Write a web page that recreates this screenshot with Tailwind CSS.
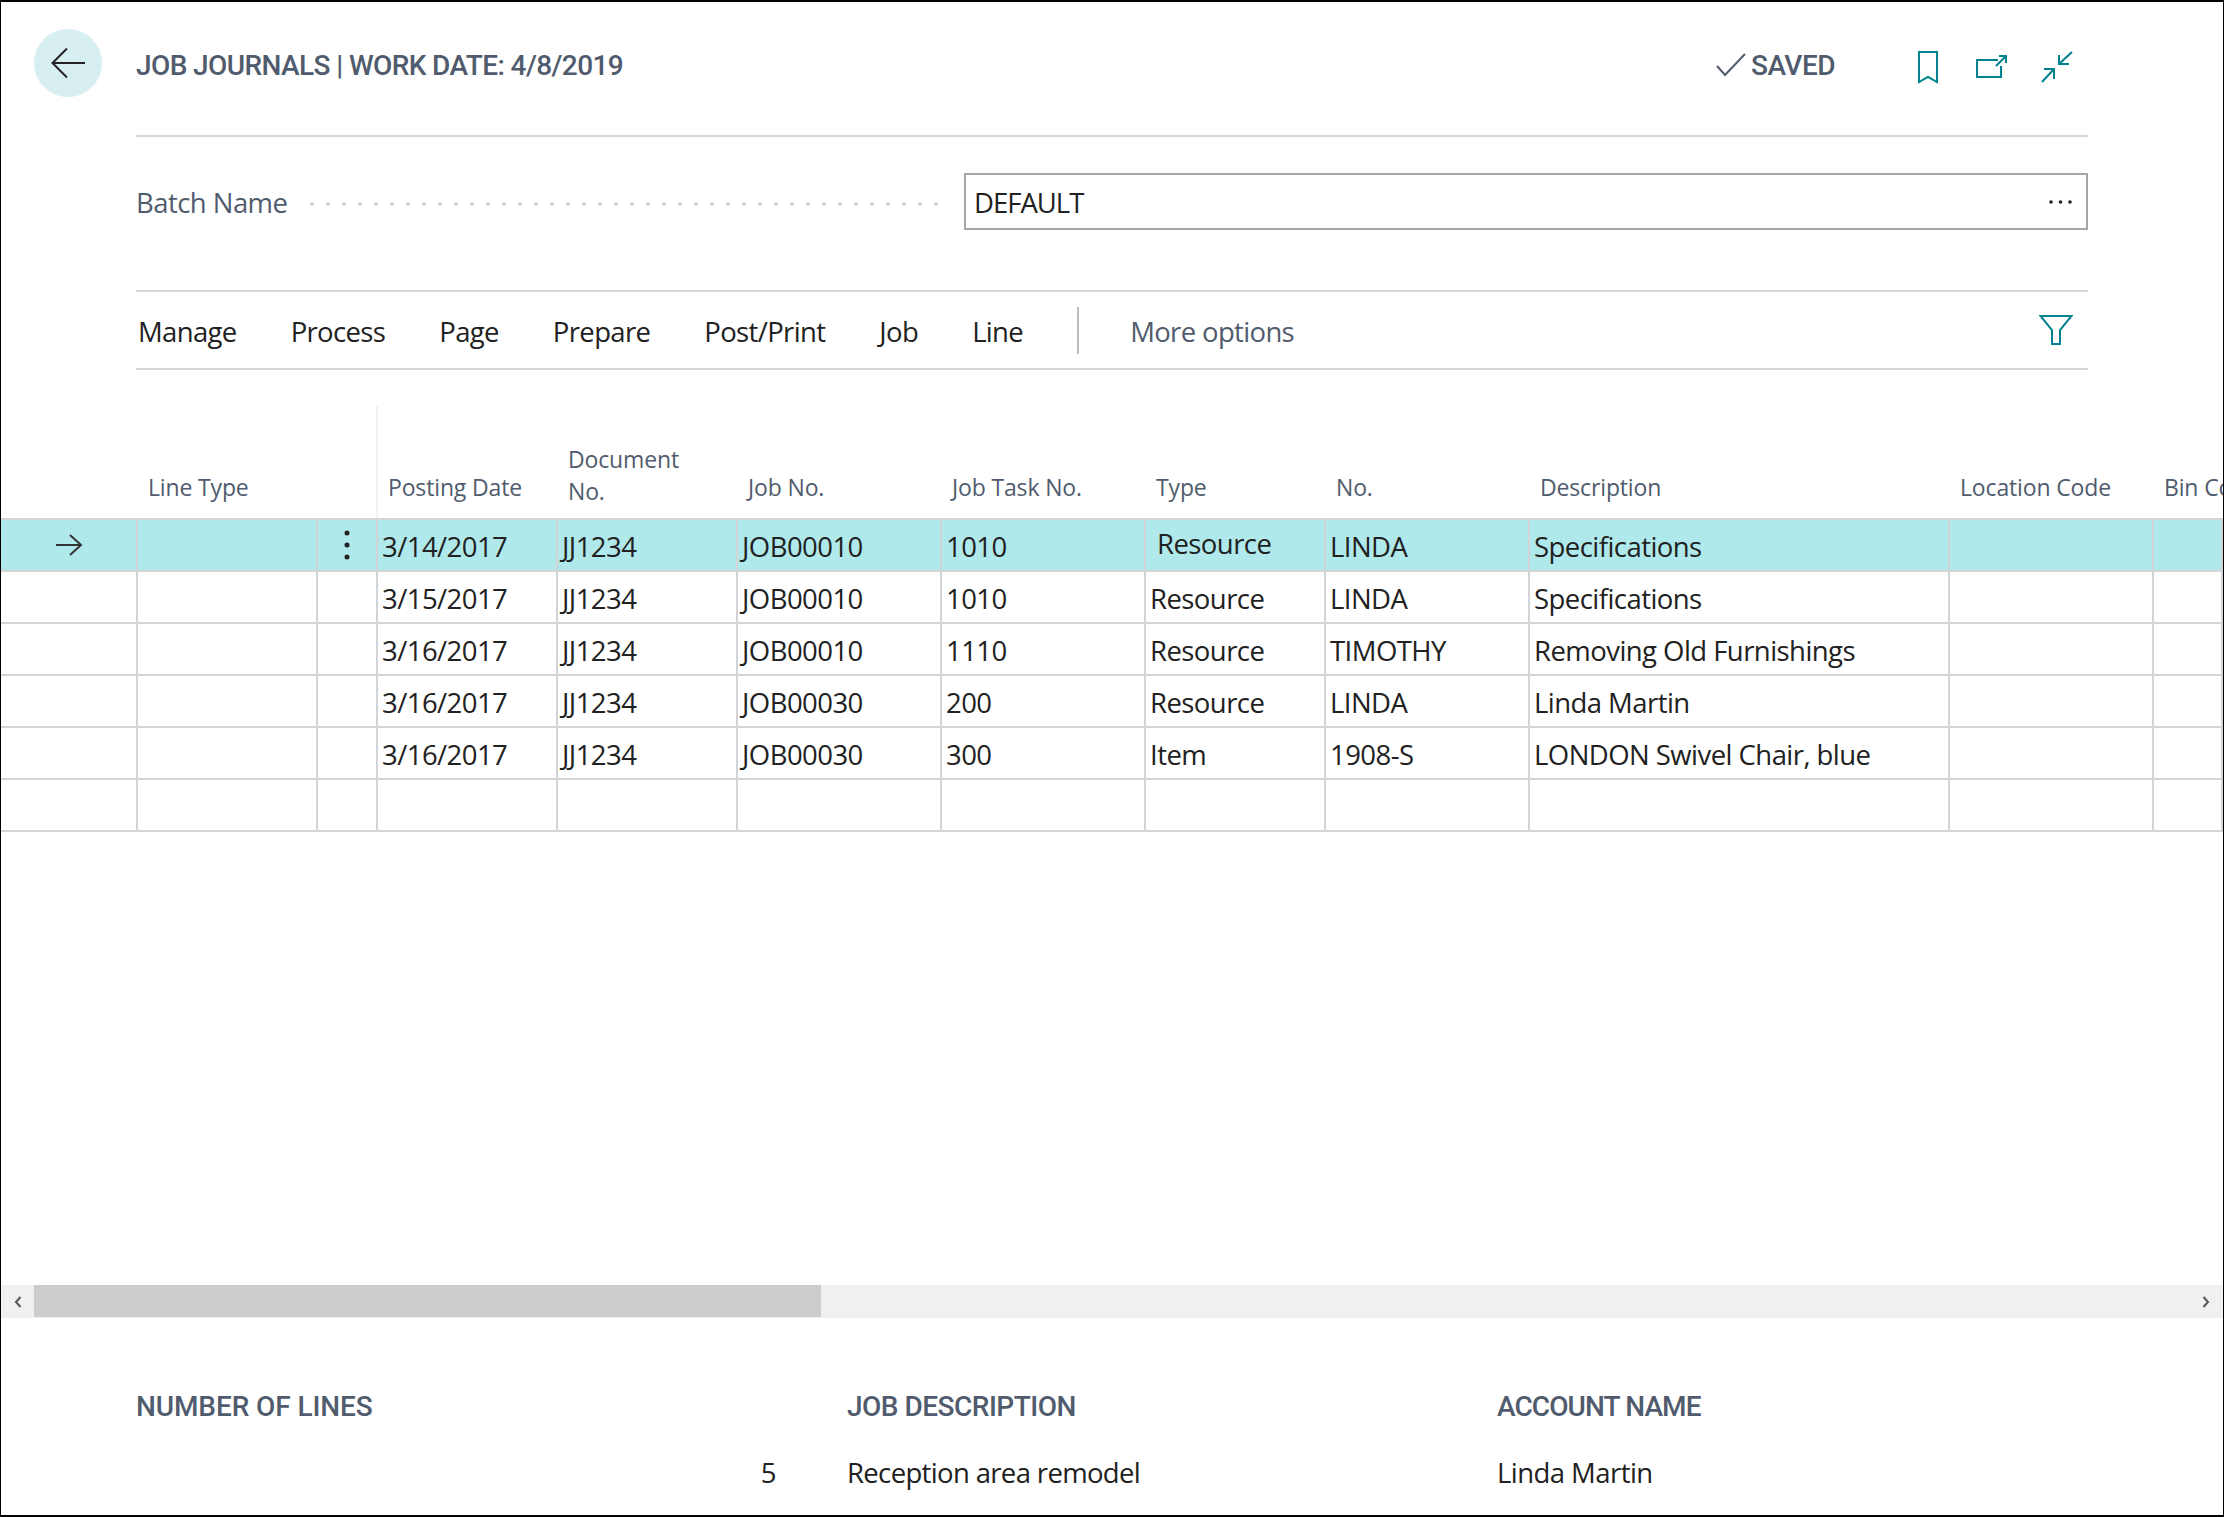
<!DOCTYPE html>
<html lang="en">
<head>
<meta charset="UTF-8" />
<title>Job Journals</title>
<script src="https://cdn.jsdelivr.net/npm/@tailwindcss/browser@4"></script>
</head>
<body class="bg-white">
<div class="w-[2224px] h-[1517px] overflow-hidden bg-white border-x border-y-2 border-black font-['Open_Sans',sans-serif] text-[27.5px] tracking-[-0.55px] text-[#212121]">

    <!-- header -->
    <div class="flex items-center h-[68px] mt-[27px] pl-[33px] pr-[150px]">
        <div class="w-[68px] h-[68px] rounded-full bg-[#d8eff2] flex items-center justify-center">
            <svg width="36" height="32" viewBox="0 0 36 32" fill="none" stroke="#222" stroke-width="2"><path d="M35 16H3M17 1.500 2.500 16 17 30.500"/></svg>
        </div>
        <div class="ml-[34px] mt-[5px] font-['Roboto',sans-serif] font-medium text-[28px] text-[#505c6d] tracking-[-0.6px]">JOB JOURNALS | WORK DATE: 4/8/2019</div>
        <div class="ml-auto flex items-center">
            <svg class="mt-[4px]" width="30" height="24" viewBox="0 0 30 24" fill="none" stroke="#505c6d" stroke-width="2"><path d="M1 13l8 9L29 1"/></svg>
            <span class="ml-[5px] mt-[5px] font-['Roboto',sans-serif] font-medium text-[28px] text-[#505c6d] tracking-[-0.5px]">SAVED</span>
            <svg class="ml-[83px] mt-[9px]" width="20" height="33" viewBox="0 0 20 33" fill="none" stroke="#00828f" stroke-width="2"><path d="M1 1h18v30l-9-5-9 5z"/></svg>
            <svg class="ml-[38px] mt-[8px]" width="31" height="24" viewBox="0 0 31 24" fill="none" stroke="#00828f" stroke-width="2"><path d="M22 5H1v17h24V11M20 11 30 1M23 1h7v7"/></svg>
            <svg class="ml-[34px] mt-[8px]" width="32" height="32" viewBox="0 0 32 32" fill="none" stroke="#00828f" stroke-width="2"><path d="M31 1 18 13M18 4v9h10M1 31 13 18M3 18h10v10"/></svg>
        </div>
    </div>
    <div class="ml-[135px] mt-[38px] w-[1952px] h-[2px] bg-[#d2d6da]"></div>

    <!-- batch name -->
    <div class="flex items-center ml-[135px] w-[1952px] h-[57px] mt-[36px]">
        <span class="w-[174px] pt-[3px] text-[#505c6d]">Batch Name</span>
        <div class="w-[634px] h-[4px] mt-[5px] bg-[radial-gradient(circle_at_2px_2px,#cfcfcf_1.500px,transparent_2px)] bg-[length:16px_4px]"></div>
        <div class="ml-[20px] flex-1 h-full flex items-center justify-between border-2 border-[#a6a6a6] pl-[8px] pr-[14px]">
            <span class="pt-[3px] tracking-[-1px]">DEFAULT</span>
            <svg width="24" height="6" viewBox="0 0 24 6" fill="#222"><circle cx="3" cy="3" r="1.800"/><circle cx="12.500" cy="3" r="1.800"/><circle cx="22" cy="3" r="1.800"/></svg>
        </div>
    </div>
    <div class="ml-[135px] mt-[60px] w-[1952px] h-[2px] bg-[#d2d6da]"></div>

    <!-- action bar -->
    <div class="flex items-center ml-[135px] w-[1952px] h-[76px] pl-[2px] gap-[54px] tracking-[-0.65px]">
        <span class="pt-[4px]">Manage</span>
        <span class="pt-[4px]">Process</span>
        <span class="pt-[4px]">Page</span>
        <span class="pt-[4px]">Prepare</span>
        <span class="pt-[4px]">Post/Print</span>
        <span class="pt-[4px]">Job</span>
        <span class="pt-[4px]">Line</span>
        <div class="w-[2px] h-[47px] bg-[#b8bcc2]"></div>
        <span class="pt-[4px] ml-[-3px] text-[#505c6d]">More options</span>
        <svg class="ml-auto mr-[15px]" width="34" height="30" viewBox="0 0 34 30" fill="none" stroke="#00828f" stroke-width="2"><path d="M1.500 1h31L21 15v14h-8V15z"/></svg>
    </div>
    <div class="ml-[135px] w-[1952px] h-[2px] bg-[#d2d6da]"></div>

    <!-- table header -->
    <div class="mt-[36px] h-[114px] grid grid-cols-[137px_180px_60px_180px_180px_204px_204px_180px_204px_420px_204px_1fr] border-b-2 border-[#d2d4d8] text-[23px] tracking-[-0.15px] text-[#505c6d] *:flex *:items-end *:pb-[14px] *:pl-[10px] *:whitespace-nowrap">
        <div></div>
        <div>Line Type</div>
        <div class="border-r-2 border-[#f3f3f3]"></div>
        <div>Posting Date</div>
        <div class="leading-[32px] !pb-[11px]">Document<br />No.</div>
        <div>Job No.</div>
        <div>Job Task No.</div>
        <div>Type</div>
        <div>No.</div>
        <div>Description</div>
        <div>Location Code</div>
        <div>Bin Code</div>
    </div>

    <!-- rows -->
    <div class="h-[52px] grid grid-cols-[137px_180px_60px_180px_180px_204px_204px_180px_204px_420px_204px_1fr] bg-[#b0e9ec] border-b-2 border-[#d2d4d8] *:flex *:items-center *:pl-[4px] *:pt-[4px] *:border-r-2 *:border-[#d2d4d8]">
        <div class="!pl-[54px] !pt-0"><svg width="28" height="22" viewBox="0 0 28 22" fill="none" stroke="#333" stroke-width="2"><path d="M1 11h24M15 1l11 10-11 10"/></svg></div>
        <div></div>
        <div class="justify-center !pl-0 !pt-0"><svg width="6" height="30" viewBox="0 0 6 30" fill="#222"><circle cx="3" cy="3" r="2.500"/><circle cx="3" cy="15" r="2.500"/><circle cx="3" cy="27" r="2.500"/></svg></div>
        <div>3/14/2017</div>
        <div>JJ1234</div>
        <div>JOB00010</div>
        <div>1010</div>
        <div class="!pl-[11px] !pt-0 pb-[2px]">Resource</div>
        <div>LINDA</div>
        <div>Specifications</div>
        <div></div>
        <div></div>
    </div>
    <div class="h-[52px] grid grid-cols-[137px_180px_60px_180px_180px_204px_204px_180px_204px_420px_204px_1fr] border-b-2 border-[#d2d4d8] *:flex *:items-center *:pl-[4px] *:pt-[4px] *:border-r-2 *:border-[#d2d4d8]">
        <div></div><div></div><div></div>
        <div>3/15/2017</div>
        <div>JJ1234</div>
        <div>JOB00010</div>
        <div>1010</div>
        <div>Resource</div>
        <div>LINDA</div>
        <div>Specifications</div>
        <div></div><div></div>
    </div>
    <div class="h-[52px] grid grid-cols-[137px_180px_60px_180px_180px_204px_204px_180px_204px_420px_204px_1fr] border-b-2 border-[#d2d4d8] *:flex *:items-center *:pl-[4px] *:pt-[4px] *:border-r-2 *:border-[#d2d4d8]">
        <div></div><div></div><div></div>
        <div>3/16/2017</div>
        <div>JJ1234</div>
        <div>JOB00010</div>
        <div>1110</div>
        <div>Resource</div>
        <div>TIMOTHY</div>
        <div>Removing Old Furnishings</div>
        <div></div><div></div>
    </div>
    <div class="h-[52px] grid grid-cols-[137px_180px_60px_180px_180px_204px_204px_180px_204px_420px_204px_1fr] border-b-2 border-[#d2d4d8] *:flex *:items-center *:pl-[4px] *:pt-[4px] *:border-r-2 *:border-[#d2d4d8]">
        <div></div><div></div><div></div>
        <div>3/16/2017</div>
        <div>JJ1234</div>
        <div>JOB00030</div>
        <div>200</div>
        <div>Resource</div>
        <div>LINDA</div>
        <div>Linda Martin</div>
        <div></div><div></div>
    </div>
    <div class="h-[52px] grid grid-cols-[137px_180px_60px_180px_180px_204px_204px_180px_204px_420px_204px_1fr] border-b-2 border-[#d2d4d8] *:flex *:items-center *:pl-[4px] *:pt-[4px] *:border-r-2 *:border-[#d2d4d8]">
        <div></div><div></div><div></div>
        <div>3/16/2017</div>
        <div>JJ1234</div>
        <div>JOB00030</div>
        <div>300</div>
        <div>Item</div>
        <div>1908-S</div>
        <div>LONDON Swivel Chair, blue</div>
        <div></div><div></div>
    </div>
    <div class="h-[52px] grid grid-cols-[137px_180px_60px_180px_180px_204px_204px_180px_204px_420px_204px_1fr] border-b-2 border-[#d2d4d8] *:border-r-2 *:border-[#d2d4d8]">
        <div></div><div></div><div></div><div></div><div></div><div></div><div></div><div></div><div></div><div></div><div></div><div></div>
    </div>

    <!-- scrollbar -->
    <div class="mt-[453px] h-[33px] flex bg-[#f0f0f0]">
        <div class="w-[33px] flex items-center justify-center">
            <svg width="8" height="12" viewBox="0 0 8 12" fill="none" stroke="#555" stroke-width="2"><path d="M6.500 1 2 6l4.500 5"/></svg>
        </div>
        <div class="w-[787px] h-[32px] bg-[#cdcdcd]"></div>
        <div class="ml-auto w-[34px] flex items-center justify-center">
            <svg width="8" height="12" viewBox="0 0 8 12" fill="none" stroke="#555" stroke-width="2"><path d="M1.500 1 6 6l-4.500 5"/></svg>
        </div>
    </div>

    <!-- footer fields -->
    <div class="flex ml-[135px] mt-[70px]">
        <div class="w-[640px]">
            <div class="font-['Roboto',sans-serif] font-medium text-[28px] text-[#505c6d] tracking-[-0.1px] leading-[38px]">NUMBER OF LINES</div>
            <div class="mt-[29px] leading-[36px] text-right">5</div>
        </div>
        <div class="ml-[71px] w-[650px]">
            <div class="font-['Roboto',sans-serif] font-medium text-[28px] text-[#505c6d] tracking-[-0.5px] leading-[38px]">JOB DESCRIPTION</div>
            <div class="mt-[29px] leading-[36px] tracking-[-0.65px]">Reception area remodel</div>
        </div>
        <div>
            <div class="font-['Roboto',sans-serif] font-medium text-[28px] text-[#505c6d] tracking-[-0.9px] leading-[38px]">ACCOUNT NAME</div>
            <div class="mt-[29px] leading-[36px]">Linda Martin</div>
        </div>
    </div>
</div>
</body>
</html>
